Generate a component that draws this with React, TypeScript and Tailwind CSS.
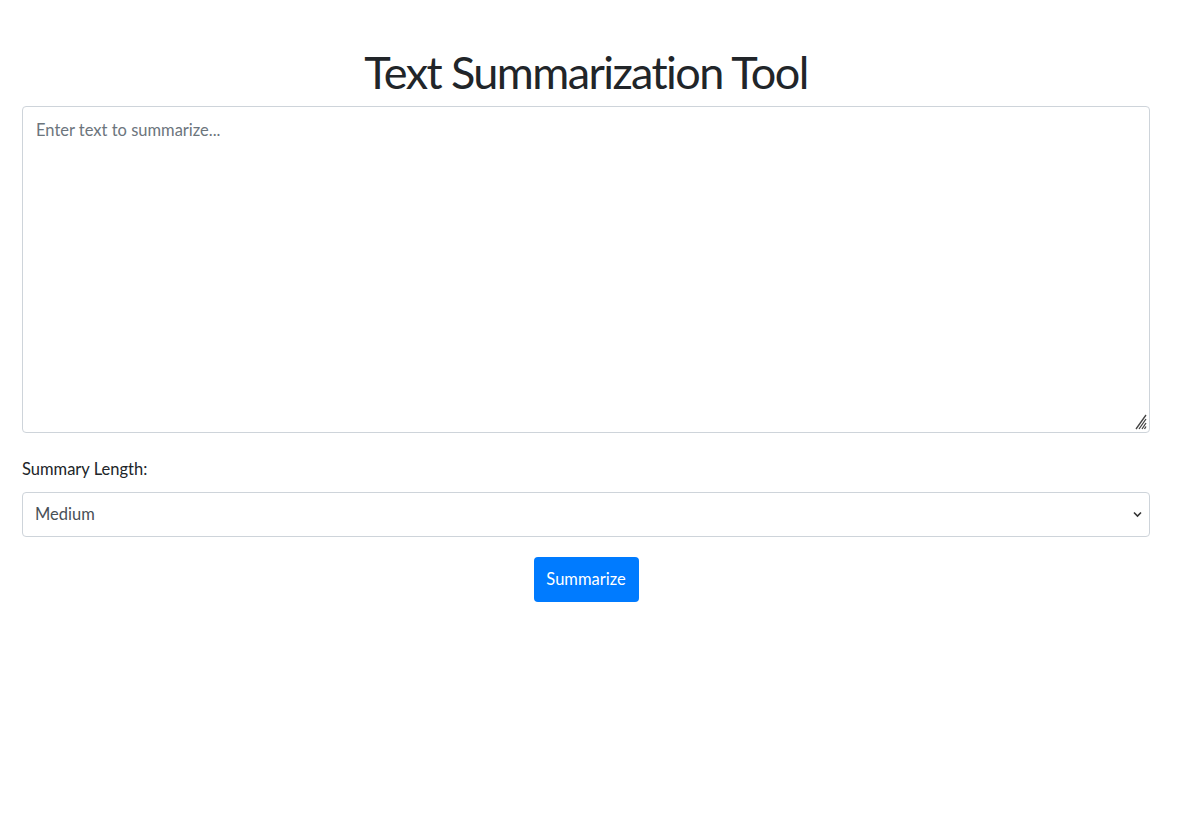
export default function App() {
  return (
    <div className="min-h-[815px] bg-white font-['Lato',sans-serif] text-[#212529]">
      <div className="ml-[22px] w-[1128px] pt-[44px]">
        <h1 className="mb-[6px] text-center text-[45px] leading-[56px] font-normal tracking-[-1.6px]">
          Text Summarization Tool
        </h1>

        <div className="relative mb-[22px]">
          <textarea
            className="block h-[327px] w-full resize-none rounded-[4px] border border-[#ced4da] px-[13px] py-[10px] text-[16.5px] leading-[26px] text-[#495057] outline-none placeholder:text-[#6c757d]"
            placeholder="Enter text to summarize..."
          />
          {/* resize grip */}
          <svg
            className="pointer-events-none absolute bottom-[2px] right-[2px]"
            width="18"
            height="20"
            viewBox="0 0 18 20"
          >
            <path
              d="M16 4 L6 18 M16 8 L9 18 M16 12 L12 18 M16 15.5 L14.5 18"
              stroke="#444"
              strokeWidth="1.3"
            />
          </svg>
        </div>

        <div className="mb-[20px]">
          <label className="mb-[9px] block text-[16.5px] leading-[28px]">Summary Length:</label>
          <div className="relative">
            <select
              defaultValue="medium"
              className="block h-[45px] w-full appearance-none rounded-[4px] border border-[#ced4da] bg-white px-[12px] text-[16.5px] text-[#495057] outline-none"
            >
              <option value="short">Short</option>
              <option value="medium">Medium</option>
              <option value="long">Long</option>
            </select>
            <svg
              className="pointer-events-none absolute right-[8px] top-[19px]"
              width="9"
              height="7"
              viewBox="0 0 9 7"
              fill="none"
            >
              <path d="M1 1.5 L4.5 5 L8 1.5" stroke="#333" strokeWidth="1.6" />
            </svg>
          </div>
        </div>

        <div className="flex justify-center">
          <button className="h-[45px] w-[105px] rounded-[4px] bg-[#007bff] text-[16.5px] text-white">
            Summarize
          </button>
        </div>
      </div>
    </div>
  )
}
